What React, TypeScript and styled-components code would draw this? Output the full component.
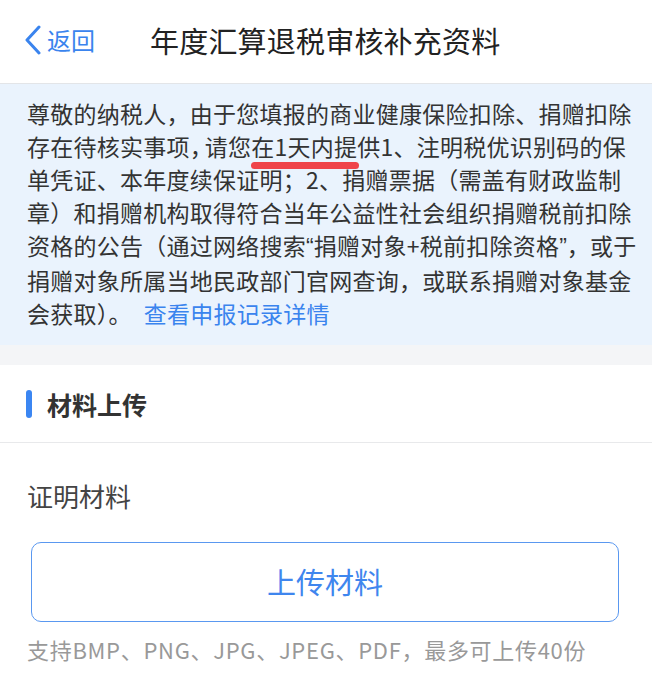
import React from "react";
import styled, { createGlobalStyle } from "styled-components";

const Global = createGlobalStyle`
  html, body { margin: 0; padding: 0; background: #fff; }
  body { font-family: "Noto Sans CJK SC", "Noto Sans", sans-serif; -webkit-font-smoothing: antialiased; }
  * { box-sizing: border-box; }
`;

const Page = styled.div`
  width: 652px;
  min-height: 674px;
  background: #fff;
  overflow: hidden;
`;

const Header = styled.header`
  height: 84px;
  display: flex;
  align-items: center;
  padding: 0 0 3px 24px;
  border-bottom: 1px solid #e3e5e8;
  background: #fff;
`;

const Back = styled.div`
  display: flex;
  align-items: center;
  gap: 5px;
  color: #3a84ee;
  font-size: 24px;
  line-height: 1;
  width: 126px;
`;

const Title = styled.h1`
  margin: 0;
  font-size: 29px;
  font-weight: 400;
  color: #222;
  letter-spacing: 0.2px;
`;

const Notice = styled.section`
  background: #eaf3fd;
  padding: 13px 16px 15px 27px;
`;

const NoticeText = styled.p`
  margin: 0;
  font-size: 23px;
  line-height: 33px;
  letter-spacing: 0.25px;
  color: #333;
  white-space: nowrap;
`;

const Quote = styled.span`
  font-family: "Liberation Sans", Arial, sans-serif;
  letter-spacing: 0;
`;

const Narrow = styled.span`
  letter-spacing: -8px;
`;

const Mark = styled.span`
  position: relative;
  &::after {
    content: "";
    position: absolute;
    left: 0;
    right: -2px;
    bottom: -6px;
    height: 7px;
    border-radius: 4px;
    background: #ef434a;
  }
`;

const Link = styled.span`
  color: #3a84ee;
  margin-left: 12px;
`;

const Gap = styled.div`
  height: 20px;
  background: #f4f5f7;
`;

const SectionHead = styled.div`
  height: 78px;
  display: flex;
  align-items: center;
  gap: 15px;
  padding-left: 26px;
  border-bottom: 1px solid #e8e9eb;
`;

const Bar = styled.span`
  width: 6px;
  height: 28px;
  border-radius: 3px;
  background: #3b86f2;
`;

const SectionTitle = styled.h2`
  margin: 0;
  font-size: 25px;
  font-weight: 700;
  color: #333;
`;

const Field = styled.div`
  padding: 35px 33px 0 27px;
  display: flex;
  flex-direction: column;
`;

const FieldLabel = styled.div`
  font-size: 26px;
  line-height: 36px;
  color: #444;
`;

const UploadButton = styled.button`
  margin: 28px 0 0 4px;
  height: 80px;
  border: 1.5px solid #5a98f0;
  border-radius: 10px;
  background: #fff;
  color: #3f86ee;
  font-family: inherit;
  font-size: 29px;
  display: flex;
  align-items: center;
  justify-content: center;
  padding: 0 0 2px;
`;

const Hint = styled.div`
  margin-top: 12px;
  font-size: 22px;
  line-height: 30px;
  letter-spacing: 0.7px;
  color: #999;
`;

export default function App() {
  return (
    <Page>
      <Global />
      <Header>
        <Back>
          <svg width="18" height="30" viewBox="0 0 18 30" fill="none">
            <polyline points="15,2 3,15 15,28" stroke="#3a84ee" strokeWidth="3" strokeLinecap="round" strokeLinejoin="round" />
          </svg>
          <span>返回</span>
        </Back>
        <Title>年度汇算退税审核补充资料</Title>
      </Header>
      <Notice>
        <NoticeText>
          尊敬的纳税人，由于您填报的商业健康保险扣除、捐赠扣除
          <br />
          存在待核实事项<Narrow>，</Narrow>请您<Mark>在1天内提</Mark>供1、注明税优识别码的保
          <br />
          单凭证、本年度续保证明；2、捐赠票据（需盖有财政监制
          <br />
          章）和捐赠机构取得符合当年公益性社会组织捐赠税前扣除
          <br />
          资格的公告（通过网络搜索<Quote>“</Quote>捐赠对象+税前扣除资格<Quote>”</Quote>，或于
          <br />
          捐赠对象所属当地民政部门官网查询，或联系捐赠对象基金
          <br />
          会获取）。<Link>查看申报记录详情</Link>
        </NoticeText>
      </Notice>
      <Gap />
      <SectionHead>
        <Bar />
        <SectionTitle>材料上传</SectionTitle>
      </SectionHead>
      <Field>
        <FieldLabel>证明材料</FieldLabel>
        <UploadButton>上传材料</UploadButton>
        <Hint>支持BMP、PNG、JPG、JPEG、PDF，最多可上传40份</Hint>
      </Field>
    </Page>
  );
}
